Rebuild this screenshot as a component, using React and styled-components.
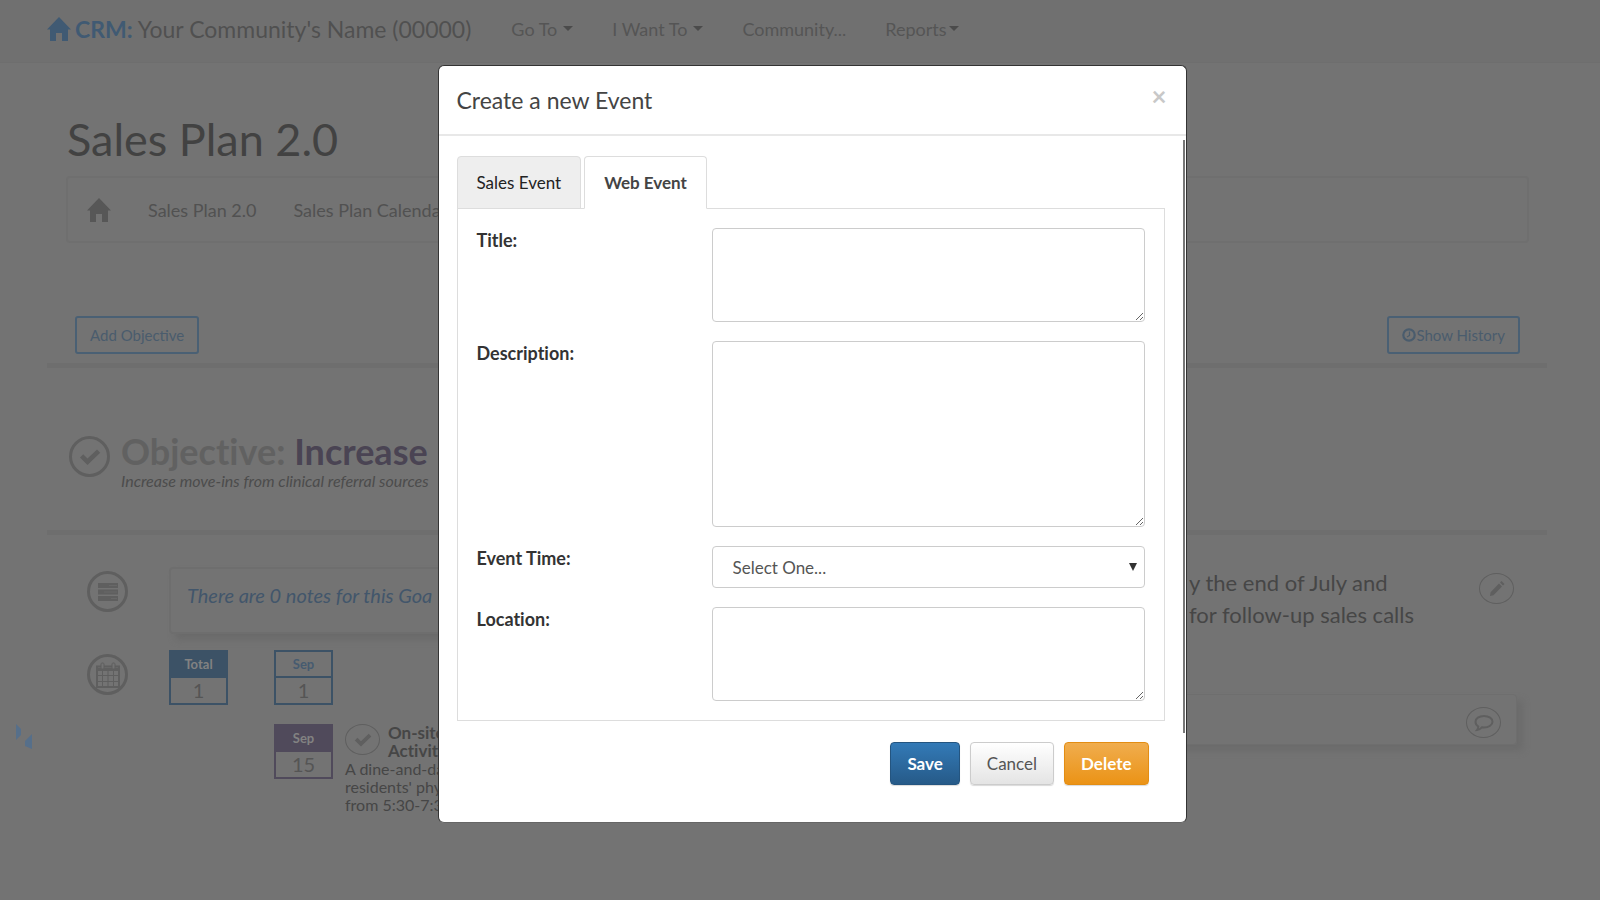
import React, { useState } from "react";
import styled, { createGlobalStyle } from "styled-components";

const GlobalStyle = createGlobalStyle`
  * {
    box-sizing: border-box;
  }
  body {
    margin: 0;
    background: #737373;
    color: #464646;
    font-family: Lato, "Open Sans", sans-serif;
    font-size: 18px;
    font-variant-ligatures: none;
  }
  button, select, textarea {
    font-family: inherit;
  }
`;

const Page = styled.div`
  position: relative;
  min-height: 100vh;
  overflow: hidden;
`;

const Navbar = styled.nav`
  display: flex;
  align-items: center;
  height: 63px;
  padding: 0 47px 5px;
  background: #707070;
  border-bottom: 1px solid #6e6e6e;
`;

const Brand = styled.a`
  display: flex;
  align-items: center;
  gap: 4px;
  margin-right: 40px;
  color: #505050;
  font-size: 23px;
  line-height: 32px;
  text-decoration: none;
  white-space: nowrap;
  strong {
    color: #405a73;
  }
  svg {
    color: #405a73;
  }
`;

const NavLink = styled.a`
  display: flex;
  align-items: center;
  gap: ${(props) => (props.$tight ? 2 : 6)}px;
  margin-right: 39px;
  color: #555;
  font-size: 18px;
  line-height: 24px;
  text-decoration: none;
  white-space: nowrap;
`;

const Caret = styled.span`
  border: 5px solid transparent;
  border-top-color: #4b4b4b;
  border-bottom: 0;
`;

const Content = styled.main`
  padding: 0 53px 0 47px;
`;

const PageTitle = styled.h1`
  margin: 48px 20px 9px;
  color: #424242;
  font-size: 45px;
  font-weight: 400;
  line-height: 56px;
`;

const SubNav = styled.div`
  display: flex;
  align-items: center;
  gap: 37px;
  height: 67px;
  margin: 0 18px 73px 19px;
  padding: 0 19px;
  border: 2px solid #6f6f6f;
  border-radius: 4px;
  a {
    color: #515151;
    line-height: 24px;
    text-decoration: none;
    white-space: nowrap;
  }
  svg {
    display: block;
    color: #575757;
  }
`;

const Toolbar = styled.div`
  display: flex;
  justify-content: space-between;
  padding: 0 27px 9px 28px;
`;

const OutlineButton = styled.button`
  display: flex;
  align-items: center;
  height: 38px;
  padding: 0 13px;
  border: 2px solid #4a6074;
  border-radius: 3px;
  background: transparent;
  color: #4a5c6d;
  font-size: 15px;
`;

const Rule = styled.hr`
  height: 5px;
  margin: 0;
  border: 0;
  background: #6e6e6e;
`;

const Circle = styled.span`
  display: flex;
  flex: none;
  align-items: center;
  justify-content: center;
  width: ${(props) => (props.$small ? 35 : 41)}px;
  height: ${(props) => (props.$small ? 31 : 41)}px;
  border: ${(props) => (props.$small ? "1px" : "3px")} solid #5f5f5f;
  border-radius: 50%;
  color: #5f5f5f;
`;

const Objective = styled.section`
  display: flex;
  gap: 11px;
  padding: 65px 22px 39px;
  > ${Circle} {
    margin-top: 3px;
  }
`;

const ObjectiveTitle = styled.h2`
  margin: 0 0 2px;
  color: #616161;
  font-size: 36px;
  font-weight: 700;
  line-height: 36px;
  white-space: nowrap;
  span {
    color: #4a4453;
  }
`;

const ObjectiveText = styled.p`
  margin: 0;
  color: #4c4c4c;
  font-size: 16px;
  font-style: italic;
  line-height: 20px;
  white-space: nowrap;
`;

const Goal = styled.section`
  display: grid;
  grid-template-columns: 1fr 1fr;
  padding: 32px 30px 0 40px;
`;

const GoalRow = styled.div`
  display: flex;
  gap: 41px;
  margin-bottom: 16px;
  > ${Circle} {
    margin-top: 4px;
  }
`;

const NotesBox = styled.div`
  flex: 1;
  height: 67px;
  padding: 14px 16px;
  border: 2px solid #6e6e6e;
  border-radius: 4px;
  box-shadow: 6px 6px 6px #6b6b6b;
  color: #42566b;
  font-size: 20px;
  font-style: italic;
  line-height: 24px;
  white-space: nowrap;
`;

const Months = styled.div`
  display: flex;
  gap: 46px;
`;

const MonthList = styled.div`
  display: flex;
  flex-direction: column;
  gap: 19px;
`;

const cardColors = { blue: "#3c5266", purple: "#504a5b" };

const CalendarCard = styled.div`
  flex: none;
  width: 59px;
  height: 55px;
  border: 2px solid ${(props) => cardColors[props.$color]};
  color: #555;
  font-size: 20px;
  line-height: 24px;
  text-align: center;
  b {
    display: block;
    height: 26px;
    border-bottom: 2px solid ${(props) => cardColors[props.$color]};
    background: ${(props) => (props.$filled ? cardColors[props.$color] : "transparent")};
    color: ${(props) => (props.$filled ? "#828282" : "#465b70")};
    font-size: 13px;
  }
`;

const EventRow = styled.div`
  display: flex;
  gap: 12px;
`;

const EventHeader = styled.div`
  display: flex;
  gap: 8px;
  height: 36px;
  font-size: 17px;
  font-weight: 700;
  line-height: 18px;
`;

const EventText = styled.p`
  margin: 0;
  font-size: 16px;
  line-height: 18px;
`;

const GoalSide = styled.div`
  display: flex;
  flex-direction: column;
`;

const GoalText = styled.div`
  display: flex;
  justify-content: flex-end;
  align-items: flex-start;
  margin-bottom: 63px;
  padding-right: 3px;
  p {
    width: 290px;
    margin: 0;
    font-size: 22px;
    line-height: 32px;
    white-space: nowrap;
  }
  ${Circle} {
    margin-top: 6px;
  }
`;

const CommentBox = styled.div`
  display: flex;
  align-items: flex-end;
  justify-content: flex-end;
  height: 51px;
  padding: 6px 15px;
  border: 1px solid #6e6e6e;
  border-radius: 4px;
  box-shadow: 6px 6px 6px #6c6c6c;
`;

const Spinner = styled.svg`
  position: absolute;
  left: 16px;
  top: 724px;
`;

const Backdrop = styled.div`
  position: fixed;
  inset: 0;
  display: flex;
  justify-content: center;
  align-items: flex-start;
  padding: 65px 0 0 24px;
`;

const Dialog = styled.div`
  width: 749px;
  border: 1px solid #333;
  border-bottom-color: #666;
  border-radius: 6px;
  background: #fff;
`;

const DialogHeader = styled.div`
  display: flex;
  align-items: flex-start;
  justify-content: space-between;
  height: 70px;
  padding: 19px 18px;
  border-bottom: 2px solid #e8e8e8;
  h4 {
    margin: 0;
    color: #444;
    font-size: 23px;
    font-weight: 400;
    line-height: 30px;
  }
`;

const CloseButton = styled.button`
  padding: 0 1px;
  border: 0;
  background: none;
  color: #c8c8c8;
  font-size: 26px;
  font-weight: 700;
  line-height: 22px;
`;

const DialogBody = styled.div`
  margin: 4px 1px 0 0;
  padding: 16px 18px 12px;
  border-right: 2px solid #777;
`;

const Tabs = styled.div`
  display: flex;
  gap: 3px;
`;

const Tab = styled.button`
  height: 53px;
  margin-bottom: -1px;
  padding: 0 19px;
  border: 1px solid #ddd;
  border-bottom-color: ${(props) => (props.$active ? "#fff" : "#ddd")};
  border-radius: 4px 4px 0 0;
  background: ${(props) => (props.$active ? "#fff" : "#eee")};
  color: ${(props) => (props.$active ? "#444" : "#222")};
  font-size: 17px;
  font-weight: ${(props) => (props.$active ? 700 : 400)};
`;

const Form = styled.form`
  display: grid;
  gap: 19px;
  padding: 19px;
  border: 1px solid #ddd;
`;

const Field = styled.div`
  display: grid;
  grid-template-columns: 235px 1fr;
  label {
    color: #333;
    font-weight: 700;
    line-height: 24px;
  }
`;

const TextArea = styled.textarea`
  display: block;
  width: 100%;
  height: ${(props) => (props.$tall ? 186 : 94)}px;
  padding: 8px 20px;
  border: 1px solid #ccc;
  border-radius: 4px;
  color: #555;
  font-size: 18px;
`;

const SelectWrap = styled.div`
  position: relative;
  svg {
    position: absolute;
    top: 17px;
    right: 8px;
    pointer-events: none;
  }
`;

const Select = styled.select`
  display: block;
  width: 100%;
  height: 42px;
  padding: 0 20px;
  border: 1px solid #ccc;
  border-radius: 4px;
  background: #fff;
  color: #555;
  font-size: 17px;
  appearance: none;
`;

const DialogFooter = styled.div`
  display: flex;
  justify-content: flex-end;
  gap: 10px;
  padding: 9px 37px 37px;
`;

const buttonKinds = {
  primary: { top: "#337ab7", bottom: "#265a88", border: "#245580", color: "#fff" },
  plain: { top: "#fff", bottom: "#e4e4e4", border: "#ccc", color: "#555" },
  warning: { top: "#f0ad4e", bottom: "#eb9316", border: "#e38d13", color: "#fff" },
};

const Button = styled.button`
  height: 43px;
  padding: 0 16px;
  border: 1px solid ${(props) => buttonKinds[props.$kind].border};
  border-radius: 4px;
  background: linear-gradient(
    ${(props) => buttonKinds[props.$kind].top},
    ${(props) => buttonKinds[props.$kind].bottom}
  );
  box-shadow: 0 1px 1px rgba(0, 0, 0, 0.15);
  color: ${(props) => buttonKinds[props.$kind].color};
  font-size: 17px;
  font-weight: ${(props) => (props.$kind === "plain" ? 400 : 700)};
`;

function HomeIcon() {
  return (
    <svg width="24" height="24" viewBox="0 0 24 24" fill="currentColor">
      <path d="M12 0 24 12.5h-3V24h-6v-8H9v8H3V12.5H0L12 0z" />
    </svg>
  );
}

function CheckIcon({ size = 22 }) {
  return (
    <svg width={size} height={size} viewBox="0 0 22 22" fill="currentColor">
      <path d="M1 11.5 4.2 8.3 8.5 12.4 18 3.5 21.2 6.7 8.5 19z" />
    </svg>
  );
}

function TasksIcon() {
  return (
    <svg width="22" height="18" viewBox="0 0 22 18" fill="currentColor">
      <path d="M1 0h20v5H1zM1 6.5h20v5H1zM1 13h20v5H1z" />
      <path d="M12 2.5h8M7 9h13M14 15.5h6" stroke="#686868" />
    </svg>
  );
}

function CalendarIcon() {
  return (
    <svg width="24" height="26" viewBox="0 0 24 26" fill="none" stroke="currentColor">
      <path d="M1 4.5h22V25H1z" strokeWidth="2" />
      <path d="M1 7.5h22" strokeWidth="3" />
      <path d="M1 13.5h22M1 19.5h22M6.5 9v16M12 9v16M17.5 9v16" />
      <rect x="5" y="1" width="3" height="6" rx="1" fill="#737373" />
      <rect x="16" y="1" width="3" height="6" rx="1" fill="#737373" />
    </svg>
  );
}

function ClockIcon() {
  return (
    <svg width="14" height="14" viewBox="0 0 14 14" fill="none" stroke="currentColor">
      <circle cx="7" cy="7" r="5.7" strokeWidth="2.2" />
      <path d="M7.5 3.5v4L5 9" strokeWidth="1.2" />
    </svg>
  );
}

function PencilIcon() {
  return (
    <svg width="16" height="17" viewBox="0 0 16 17" fill="currentColor">
      <path d="M11 2.5 12.5 1 15.5 4 14 5.5zM10 3.5 13 6.5 4.5 15.2 1 16 1.6 12.2z" />
    </svg>
  );
}

function CommentIcon() {
  return (
    <svg width="20" height="18" viewBox="0 0 20 18" fill="none" stroke="currentColor" strokeWidth="2">
      <path d="M10 2c5 0 8.500 2.600 8.500 5.700S15 13.500 10 13.500c-.8 0-1.500 0-2.200-.2C6.500 14.800 5 15.800 3 16c.8-1 1.300-2.100 1.300-3.500C2.500 11.400 1.500 9.700 1.500 7.700 1.500 4.600 5 2 10 2z" />
    </svg>
  );
}

export default function App() {
  const [tab, setTab] = useState("web");

  return (
    <>
      <GlobalStyle />
      <Page>
        <Navbar>
          <Brand href="#">
            <HomeIcon />
            <span>
              <strong>CRM:</strong> Your Community's Name (00000)
            </span>
          </Brand>
          <NavLink href="#">Go To <Caret /></NavLink>
          <NavLink href="#">I Want To <Caret /></NavLink>
          <NavLink href="#">Community...</NavLink>
          <NavLink href="#" $tight>Reports<Caret /></NavLink>
        </Navbar>
        <Content>
          <PageTitle>Sales Plan 2.0</PageTitle>
          <SubNav>
            <a href="#" aria-label="Home"><HomeIcon /></a>
            <a href="#">Sales Plan 2.0</a>
            <a href="#">Sales Plan Calendar</a>
          </SubNav>
          <Toolbar>
            <OutlineButton>Add Objective</OutlineButton>
            <OutlineButton><ClockIcon />Show History</OutlineButton>
          </Toolbar>
          <Rule />
          <Objective>
            <Circle><CheckIcon /></Circle>
            <div>
              <ObjectiveTitle>Objective: <span>Increase</span></ObjectiveTitle>
              <ObjectiveText>Increase move-ins from clinical referral sources</ObjectiveText>
            </div>
          </Objective>
          <Rule />
          <Goal>
            <div>
              <GoalRow>
                <Circle><TasksIcon /></Circle>
                <NotesBox>There are 0 notes for this Goa</NotesBox>
              </GoalRow>
              <GoalRow>
                <Circle><CalendarIcon /></Circle>
                <Months>
                  <CalendarCard $color="blue" $filled><b>Total</b>1</CalendarCard>
                  <MonthList>
                    <CalendarCard $color="blue"><b>Sep</b>1</CalendarCard>
                    <EventRow>
                      <CalendarCard $color="purple" $filled><b>Sep</b>15</CalendarCard>
                      <div>
                        <EventHeader>
                          <Circle $small><CheckIcon size={18} /></Circle>
                          <span>On-site<br />Activity</span>
                        </EventHeader>
                        <EventText>
                          A dine-and-da<br />residents' phy<br />from 5:30-7:3
                        </EventText>
                      </div>
                    </EventRow>
                  </MonthList>
                </Months>
              </GoalRow>
            </div>
            <GoalSide>
              <GoalText>
                <p>y the end of July and<br />for follow-up sales calls</p>
                <Circle $small><PencilIcon /></Circle>
              </GoalText>
              <CommentBox>
                <Circle $small><CommentIcon /></Circle>
              </CommentBox>
            </GoalSide>
          </Goal>
        </Content>
        <Spinner width="18" height="26" viewBox="0 0 18 26" fill="#566f8a">
          <path d="M0 0 5 5v6L0 16z" />
          <path d="M16 10v15l-7-3v-5z" />
        </Spinner>
      </Page>
      <Backdrop>
        <Dialog role="dialog" aria-labelledby="dialog-title">
          <DialogHeader>
            <h4 id="dialog-title">Create a new Event</h4>
            <CloseButton>×</CloseButton>
          </DialogHeader>
          <DialogBody>
            <Tabs>
              <Tab $active={tab === "sales"} onClick={() => setTab("sales")}>Sales Event</Tab>
              <Tab $active={tab === "web"} onClick={() => setTab("web")}>Web Event</Tab>
            </Tabs>
            <Form>
              <Field>
                <label htmlFor="title">Title:</label>
                <TextArea id="title" />
              </Field>
              <Field>
                <label htmlFor="description">Description:</label>
                <TextArea id="description" $tall />
              </Field>
              <Field>
                <label htmlFor="time">Event Time:</label>
                <SelectWrap>
                  <Select id="time">
                    <option>Select One...</option>
                  </Select>
                  <svg width="8" height="8" viewBox="0 0 8 8" fill="#333">
                    <path d="M0 0h8L4 8z" />
                  </svg>
                </SelectWrap>
              </Field>
              <Field>
                <label htmlFor="location">Location:</label>
                <TextArea id="location" />
              </Field>
            </Form>
          </DialogBody>
          <DialogFooter>
            <Button $kind="primary">Save</Button>
            <Button $kind="plain">Cancel</Button>
            <Button $kind="warning">Delete</Button>
          </DialogFooter>
        </Dialog>
      </Backdrop>
    </>
  );
}
